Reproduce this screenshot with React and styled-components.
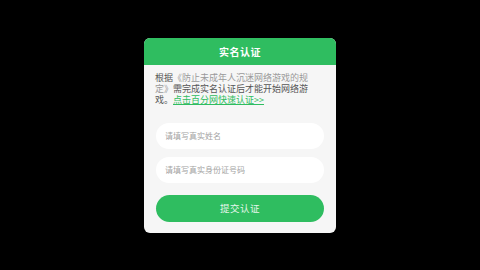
import React from "react";
import styled, { createGlobalStyle } from "styled-components";

const GlobalStyle = createGlobalStyle`
  html, body {
    margin: 0;
    padding: 0;
    background: #000;
  }
  body {
    font-family: "Noto Sans CJK SC", "Noto Sans", sans-serif;
  }
`;

const Page = styled.div`
  width: 480px;
  height: 270px;
  display: flex;
  align-items: center;
  justify-content: center;
`;

const Card = styled.div`
  width: 192px;
  height: 195px;
  background: #f6f6f6;
  border-radius: 6px;
  overflow: hidden;
  display: flex;
  flex-direction: column;
`;

const Header = styled.div`
  height: 27px;
  background: #2fbd60;
  color: #fff;
  font-size: 10px;
  font-weight: 700;
  display: flex;
  align-items: center;
  justify-content: center;
  letter-spacing: 0.5px;
`;

const Body = styled.div`
  padding: 7px 12px 0 12px;
  display: flex;
  flex-direction: column;
`;

const Notice = styled.p`
  margin: 0 0 0 -1px;
  width: 160px;
  font-size: 9px;
  line-height: 11px;
  color: #555;
`;

const Law = styled.span`
  color: #9a9a9a;
`;

const Link = styled.a`
  color: #2fbd60;
  text-decoration: underline;
`;

const Form = styled.div`
  margin-top: 18px;
  display: flex;
  flex-direction: column;
  gap: 8px;
`;

const Input = styled.input`
  height: 26px;
  box-sizing: border-box;
  border: none;
  outline: none;
  border-radius: 13px;
  background: #fff;
  padding: 0 9px;
  font-family: inherit;
  font-size: 8px;
  color: #333;
  &::placeholder {
    color: #a3a3a3;
  }
`;

const Submit = styled.button`
  margin-top: 4px;
  height: 27px;
  border: none;
  border-radius: 14px;
  background: #2fbd60;
  color: #e6f7ec;
  font-family: inherit;
  font-size: 9.5px;
  letter-spacing: 0.5px;
  cursor: pointer;
`;

export default function App() {
  return (
    <>
      <GlobalStyle />
      <Page>
        <Card>
          <Header>实名认证</Header>
          <Body>
            <Notice>
              根据<Law>《防止未成年人沉迷网络游戏的规定》</Law>需完成实名认证后才能开始网络游戏。
              <Link href="#">点击百分网快速认证&gt;&gt;</Link>
            </Notice>
            <Form>
              <Input placeholder="请填写真实姓名" />
              <Input placeholder="请填写真实身份证号码" />
              <Submit>提交认证</Submit>
            </Form>
          </Body>
        </Card>
      </Page>
    </>
  );
}
